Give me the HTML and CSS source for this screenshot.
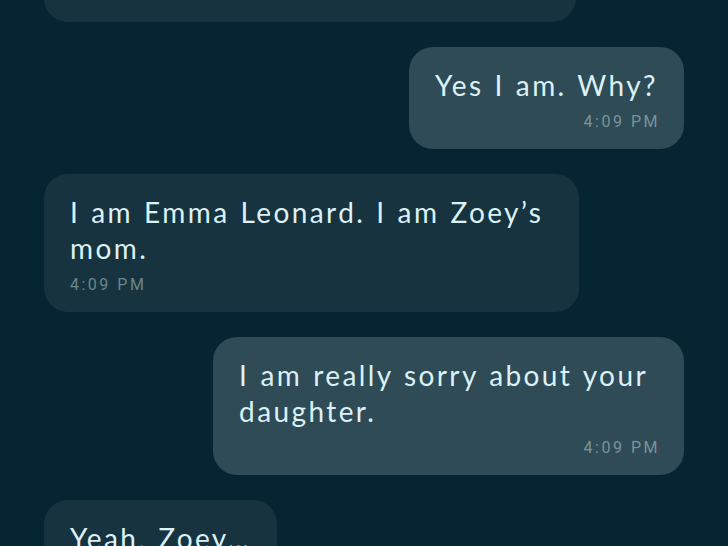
FILE: index.html
```html
<!DOCTYPE html>
<html lang="en">
<head>
<meta charset="utf-8">
<title>Chat</title>
<link rel="stylesheet" href="styles.css">
</head>
<body>
<main class="chat">
  <div class="bubble received first">
    <p class="msg-text">Hi. Are you Mr. Collins, the<br>teacher?</p>
    <span class="msg-time">4:09 PM</span>
  </div>
  <div class="bubble sent">
    <p class="msg-text">Yes I am. Why?</p>
    <span class="msg-time">4:09 PM</span>
  </div>
  <div class="bubble received wrapped">
    <p class="msg-text">I am Emma Leonard. I am Zoey’s<br>mom.</p>
    <span class="msg-time">4:09 PM</span>
  </div>
  <div class="bubble sent wrapped">
    <p class="msg-text">I am really sorry about your<br>daughter.</p>
    <span class="msg-time">4:09 PM</span>
  </div>
  <div class="bubble received">
    <p class="msg-text">Yeah, Zoey…</p>
    <span class="msg-time">4:09 PM</span>
  </div>
</main>
</body>
</html>
```
FILE: styles.css
```css
html, body {
  margin: 0;
  padding: 0;
  background: #062532;
  height: 100%;
  overflow: hidden;
}

.chat {
  display: flex;
  flex-direction: column;
  gap: 25px;
  padding: 0 44px;
}

.bubble {
  display: flex;
  flex-direction: column;
  padding: 20px 26px 17px;
  border-radius: 24px;
  max-width: 100%;
  box-sizing: border-box;
}

.received {
  align-self: flex-start;
  background: #17333f;
}

.sent {
  align-self: flex-end;
  background: #2e4b56;
}

.first {
  margin-top: -116px;
  width: 532px;
}

.msg-text {
  margin: 0;
  font-family: "Lato", "Noto Sans", sans-serif;
  font-size: 28px;
  line-height: 36px;
  color: #dcf1f6;
  letter-spacing: 2.4px;
  word-spacing: 1.5px;
  white-space: nowrap;
}

.wrapped .msg-text {
  padding-right: 10px;
}

.msg-time {
  margin-top: 9px;
  font-family: "Roboto", "Noto Sans", sans-serif;
  font-size: 16px;
  line-height: 20px;
  letter-spacing: 2.5px;
  color: #7a949b;
}

.received .msg-time {
  align-self: flex-start;
  color: #6c868e;
}

.sent .msg-time {
  align-self: flex-end;
  margin-right: -2px;
}
```
